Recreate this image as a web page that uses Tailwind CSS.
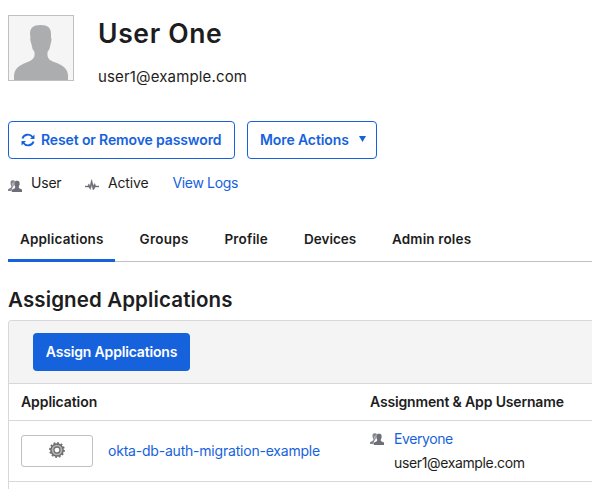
<!DOCTYPE html>
<html lang="en">
<head>
<meta charset="utf-8">
<title>User One</title>
<script src="https://cdn.jsdelivr.net/npm/@tailwindcss/browser@4"></script>
</head>
<body class="h-[489px] w-[592px] overflow-hidden bg-white pl-2 font-['Inter','Liberation_Sans',sans-serif] text-sm leading-5 text-[#1d1d21]">
<svg class="hidden">
  <symbol id="people" viewBox="0 0 14 12">
    <path fill="#85858d" d="M2.500 1.500C3.500 0 6 0 7 1L6 2.500l-.1 2.700L4 8.500 3.400 11H0V9.300L3 7.500l.5-1.200-.8-1.600z"/>
    <path fill="#dcdce0" d="M4.600 3 5.500 2.300 5.300 4.500 4.200 6.500z"/>
    <path fill="#6e6e78" d="M6.300 2.500C6.700.2 11.300.2 11.600 2.500v2.300l-.8 1.700V8L14 9.600V12H3.800V9.800l3.300-1.800V6.500L6.300 4.800z"/>
  </symbol>
</svg>
<header class="flex h-[121px] pt-[15px]">
  <svg class="h-[66px] w-[66px] border border-[#bfbfc4] bg-[#f5f5f6]" viewBox="0 0 64 64"><path fill="#abadae" d="M21 18C21 12 24 9 31.500 9S42 12 42 18v4q1 .5.300 3l-.8 3.500Q41 33 38.500 36v4c1 4 4 5 8 6.500 7 3 12.500 5.500 12.500 14V64H5v-3.500c0-8.500 5.500-11 12.500-14 4-1.500 7-3 8-6.500v-4q-2.500-3-3-7.500L21.500 25q-.8-2 0-3z"/></svg>
  <div class="ml-6 whitespace-nowrap">
    <h1 class="h-9 text-[26.5px] leading-9 font-semibold tracking-[0.65px]">User One</h1>
    <p class="mt-[16px] text-[15px] tracking-[0.15px]">user1@example.com</p>
  </div>
</header>
<div class="flex gap-3 font-semibold text-[#1662dd]">
  <button class="flex h-[38px] w-[227px] items-center rounded border border-[#1662dd] pl-3 whitespace-nowrap">
    <svg class="mr-[6px] h-[14px] w-[14px]" viewBox="0 0 14 14" fill="none" stroke="#1662dd" stroke-width="1.900"><path d="M1.500 5.500A5.500 5 0 0 1 11.500 4M12.500 8.500A5.500 5 0 0 1 2.500 10"/><path fill="#1662dd" stroke="none" d="M13.500 1.500v4.500H9zM.5 12.500V8H5z"/></svg>
    <span class="tracking-[-0.13px]">Reset or Remove password</span>
  </button>
  <button class="flex h-[38px] w-[130px] items-center rounded border border-[#1662dd] pl-3 whitespace-nowrap">
    <span class="w-[98.500px] text-left tracking-[-0.1px]">More Actions</span>
    <svg class="mb-[3px] h-[6px] w-[7px]" viewBox="0 0 7 6" fill="#1662dd"><path d="M0 0h7L3.500 6z"/></svg>
  </button>
</div>
<div class="mt-[14px] flex h-5 items-center whitespace-nowrap">
  <svg class="mt-[5px] h-3 w-[14px]"><use href="#people"/></svg>
  <span class="ml-[9px] w-[54px] tracking-[-0.2px]">User</span>
  <svg class="mt-1 h-3 w-[14px]" viewBox="0 0 14 12"><path fill="#6e6e78" stroke="#6e6e78" stroke-width=".4" d="M0 8V7h2.800l1-2.200L5 7 6.600.5 8.400 7l1.300-2.500L10.800 7H14v1h-4l-.7 2-1.200 1L6.700 6 5.400 10.500 3.700 8z"/></svg>
  <span class="ml-[9px] w-[64.500px] tracking-[-0.15px]">Active</span>
  <a class="text-[#1662dd] tracking-[-0.35px]">View Logs</a>
</div>
<nav class="mt-[23px] flex h-[46px] border-b border-[#bfbfc4] font-semibold whitespace-nowrap text-[13.5px] tracking-[0.15px]">
  <a class="h-[46px] w-[107px] border-b-3 border-[#1662dd] pt-[13px] pl-3">Applications</a>
  <a class="w-[85px] pt-[13px] pl-[24.500px] tracking-[0.3px]">Groups</a>
  <a class="w-[80px] pt-[13px] pl-[24.500px]">Profile</a>
  <a class="w-[88px] pt-[13px] pl-6 tracking-normal">Devices</a>
  <a class="pt-[13px] pl-6">Admin roles</a>
</nav>
<h2 class="mt-[24px] h-[34px] text-[20.5px] leading-7 font-semibold whitespace-nowrap tracking-[0.12px]">Assigned Applications</h2>
<section class="h-[169px] rounded-tl border-t border-l border-[#d7d7dc]">
  <div class="flex h-[63px] items-center rounded-tl border-b border-[#d7d7dc] bg-[#f4f4f4] pl-6">
    <button class="h-[38px] w-[157px] rounded bg-[#1662dd] font-semibold whitespace-nowrap text-white tracking-[-0.17px]">Assign Applications</button>
  </div>
  <div class="flex h-[37px] items-center border-b border-[#d7d7dc] pl-3 font-semibold whitespace-nowrap">
    <span class="w-[349px] tracking-[-0.08px]">Application</span>
    <span class="tracking-[-0.16px]">Assignment &amp; App Username</span>
  </div>
  <div class="flex h-[61px] items-center border-b border-[#d7d7dc] pl-3 whitespace-nowrap">
    <button class="flex h-8 w-[72px] items-center justify-center rounded-[3px] border border-[#bfbfc4]">
      <svg class="mb-[2px] h-4 w-4" viewBox="0 0 16 16" fill="none"><circle cx="8" cy="8" r="7" stroke="#6e6e70" stroke-width="1.800" stroke-dasharray="1.830 1.830"/><circle cx="8" cy="8" r="4.700" fill="#fff" stroke="#b4b4b4" stroke-width="3"/><circle cx="8" cy="8" r="6.100" stroke="#6e6e70" stroke-width="1.500"/><circle cx="8" cy="8" r="3" fill="#fff" stroke="#707072" stroke-width="1.300"/></svg>
    </button>
    <a class="ml-[15px] w-[262px] text-[#1662dd] tracking-[-0.21px]">okta-db-auth-migration-example</a>
    <div class="flex">
      <svg class="mt-[4px] h-3 w-[14px]"><use href="#people"/></svg>
      <div class="ml-[10px]">
        <a class="block h-6 text-[#1662dd] tracking-[-0.4px]">Everyone</a>
        <p class="tracking-[-0.36px]">user1@example.com</p>
      </div>
    </div>
  </div>
</section>
</body>
</html>
